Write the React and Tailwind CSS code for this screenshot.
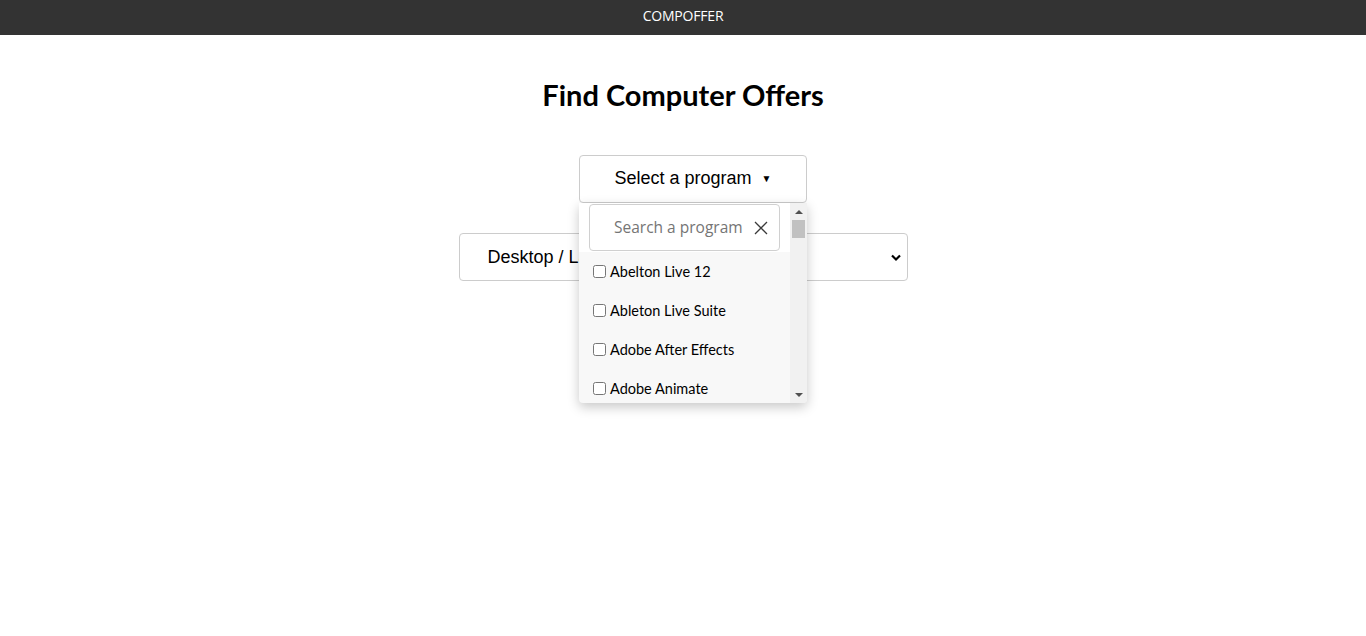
import React from "react";

const programs = [
  "Abelton Live 12",
  "Ableton Live Suite",
  "Adobe After Effects",
  "Adobe Animate",
];

// Fake classic scrollbar of the dropdown
function ScrollBar() {
  return (
    <div className="w-[17px] shrink-0 bg-[#f1f1f1] flex flex-col items-center">
      <div className="h-[17px] w-full flex items-center justify-center">
        <div className="w-0 h-0 border-l-[4px] border-r-[4px] border-b-[4px] border-l-transparent border-r-transparent border-b-[#505050]" />
      </div>
      <div className="w-[13px] h-[18px] bg-[#c1c1c1]" />
      <div className="flex-1" />
      <div className="h-[17px] w-full flex items-center justify-center">
        <div className="w-0 h-0 border-l-[4px] border-r-[4px] border-t-[4px] border-l-transparent border-r-transparent border-t-[#505050]" />
      </div>
    </div>
  );
}

function ProgramDropdown() {
  return (
    <div className="absolute left-0 top-[48px] w-[228px] h-[200px] bg-[#f8f8f8] rounded-b-[4px] shadow-[0_4px_12px_rgba(0,0,0,0.22)] flex overflow-hidden z-10">
      <div className="flex-1 flex flex-col overflow-hidden">
        <div className="bg-white px-[10px] pt-[1px] pb-[1px]">
          <div className="h-[47px] border border-[#d0d0d0] rounded-[4px] flex items-center pl-[24px] pr-[10px] bg-white pt-[1px]">
            <input
              placeholder="Search a program"
              className="flex-1 min-w-0 outline-none text-[15.5px] placeholder:text-[#757575] font-['Open_Sans',sans-serif]"
            />
            <svg width="16" height="16" viewBox="0 0 16 16" className="shrink-0">
              <path d="M2 2L14 14M14 2L2 14" stroke="#3a3a3a" strokeWidth="1.3" />
            </svg>
          </div>
        </div>
        <ul className="pt-[9px]">
          {programs.map((p) => (
            <li key={p} className="h-[39px] flex items-start pl-[14px]">
              <label className="flex items-center gap-[4px] text-[14.5px] text-black font-['Lato',sans-serif]">
                <input type="checkbox" className="w-[13px] h-[13px] m-0 accent-[#555]" />
                {p}
              </label>
            </li>
          ))}
        </ul>
      </div>
      <ScrollBar />
    </div>
  );
}

export default function App() {
  return (
    <div className="min-h-[636px] bg-white font-['Liberation_Sans',Arial,sans-serif]">
      <header className="h-[35px] bg-[#333333] flex items-center justify-center pb-[4px]">
        <span className="text-white text-[14px] font-['Open_Sans',sans-serif] tracking-[-0.2px]">
          COMPOFFER
        </span>
      </header>
      <main className="flex flex-col items-center">
        <h1 className="mt-[42px] text-[29px] font-bold text-black font-['Lato',sans-serif] leading-[36px]">
          Find Computer Offers
        </h1>
        <div className="relative mt-[42px] ml-[20px] w-[228px]">
          <button className="w-full h-[48px] border border-[#cccccc] rounded-[4px] bg-white flex items-center justify-center gap-[10px] text-[18px] text-black pb-[1px]">
            Select a program
            <span className="text-[10px] leading-none">▼</span>
          </button>
          <ProgramDropdown />
        </div>
        <div className="relative mt-[30px] w-[449px]">
          <select className="w-full h-[48px] border border-[#cccccc] rounded-[4px] bg-white pl-[28px] text-[18px] text-black appearance-none outline-none">
            <option>Desktop / Laptop</option>
          </select>
          <svg
            width="10"
            height="8"
            viewBox="0 0 10 8"
            className="absolute right-[7px] top-[21px] pointer-events-none"
          >
            <path d="M1 1.5L5 5.5L9 1.5" stroke="#000" strokeWidth="2.2" fill="none" />
          </svg>
        </div>
      </main>
    </div>
  );
}
